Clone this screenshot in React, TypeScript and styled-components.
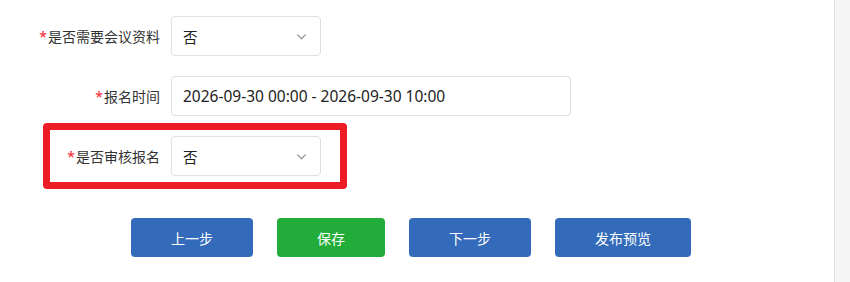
import React from 'react';
import styled, { createGlobalStyle } from 'styled-components';

const GlobalStyle = createGlobalStyle`
  html, body, #root {
    margin: 0;
    height: 100%;
  }
  body {
    background: #fff;
    font-family: "Noto Sans", "Noto Sans CJK SC", sans-serif;
    color: #333;
  }
`;

const Page = styled.div`
  display: flex;
  height: 100%;
  overflow: hidden;
`;

const Main = styled.main`
  flex: 1;
  padding-top: 16px;
`;

const ScrollTrack = styled.div`
  width: 15px;
  border-left: 1px solid #e2e2e2;
  background: #f5f5f5;
`;

const Form = styled.div`
  display: flex;
  flex-direction: column;
  gap: 20px;
`;

const Row = styled.div`
  position: relative;
  display: flex;
  align-items: center;
  height: 40px;
`;

const Label = styled.label`
  width: 171px;
  box-sizing: border-box;
  padding-right: 11px;
  text-align: right;
  font-size: 14px;
  color: #333;
  white-space: nowrap;
`;

const Star = styled.span`
  color: #f5222d;
  margin-right: 1px;
`;

const Field = styled.div<{ $width: number; $fontSize?: number }>`
  width: ${(p) => p.$width}px;
  height: 40px;
  box-sizing: border-box;
  border: 1px solid #dcdfe6;
  border-radius: 4px;
  display: flex;
  align-items: center;
  justify-content: space-between;
  padding: 0 12px 0 11px;
  font-size: ${(p) => p.$fontSize ?? 15.5}px;
  color: #222;
  background: #fff;
`;

const Chevron = styled.svg`
  width: 13px;
  height: 13px;
  color: #999;
`;

const Highlight = styled.div`
  position: absolute;
  left: 43px;
  top: -13px;
  width: 304px;
  height: 66px;
  box-sizing: border-box;
  border: 7px solid #ee1c25;
  border-radius: 4px;
  pointer-events: none;
`;

const Actions = styled.div`
  display: flex;
  gap: 24px;
  margin-top: 42px;
  padding-left: 131px;
`;

const Button = styled.button<{ $tone?: 'blue' | 'green' }>`
  height: 39px;
  padding: 0 40px;
  border: none;
  border-radius: 4px;
  background: ${(p) => (p.$tone === 'green' ? '#22ad3a' : '#336bba')};
  color: #fff;
  font-family: inherit;
  font-size: 14px;
  cursor: pointer;
`;

const Select: React.FC<{ value: string }> = ({ value }) => (
  <Field $width={150} $fontSize={14.5}>
    <span>{value}</span>
    <Chevron viewBox="0 0 12 12" fill="none">
      <path d="M2.5 4.5 6 8l3.5-3.5" stroke="currentColor" strokeWidth="1.3" strokeLinecap="round" strokeLinejoin="round" />
    </Chevron>
  </Field>
);

export default function App() {
  return (
    <>
      <GlobalStyle />
      <Page>
        <Main>
          <Form>
            <Row>
              <Label><Star>*</Star>是否需要会议资料</Label>
              <Select value="否" />
            </Row>
            <Row>
              <Label><Star>*</Star>报名时间</Label>
              <Field $width={400}>2026-09-30 00:00 - 2026-09-30 10:00</Field>
            </Row>
            <Row>
              <Highlight />
              <Label><Star>*</Star>是否审核报名</Label>
              <Select value="否" />
            </Row>
          </Form>
          <Actions>
            <Button>上一步</Button>
            <Button $tone="green">保存</Button>
            <Button>下一步</Button>
            <Button>发布预览</Button>
          </Actions>
        </Main>
        <ScrollTrack />
      </Page>
    </>
  );
}
